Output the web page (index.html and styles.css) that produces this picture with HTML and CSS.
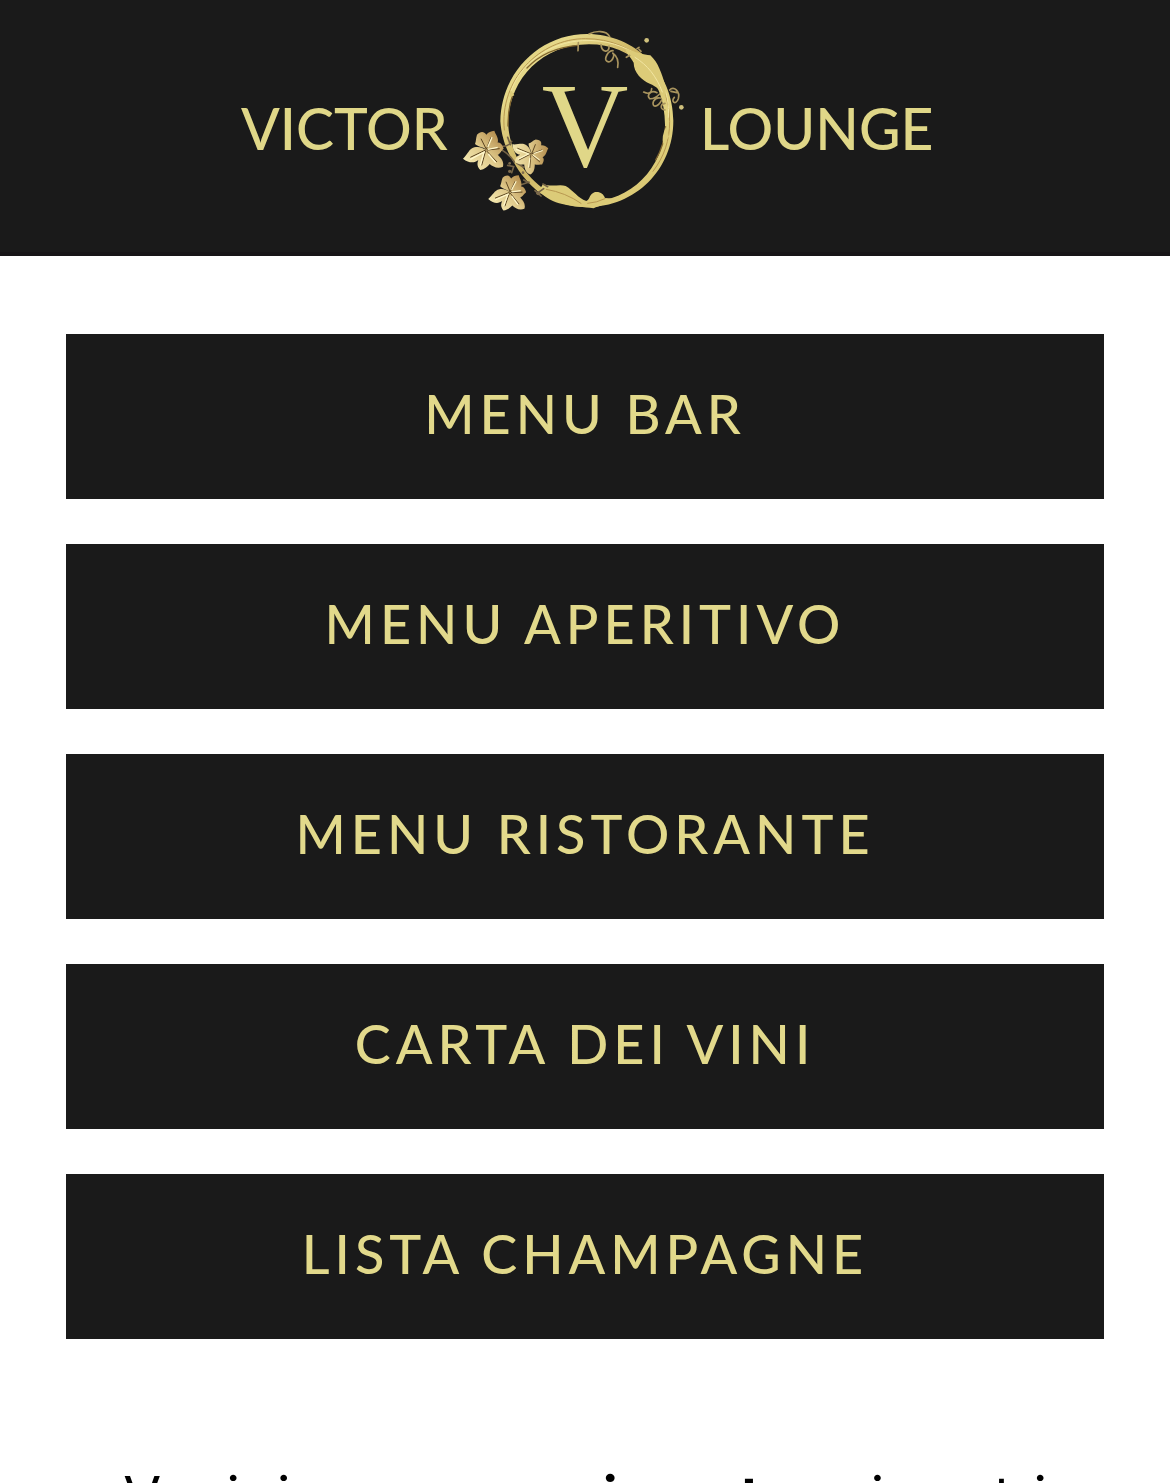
FILE: index.html
```html
<!DOCTYPE html>
<html lang="it">

<head>
  <meta charset="UTF-8">
  <meta name="viewport" content="width=device-width, initial-scale=1.0">
  <title>Victor Lounge</title>
  <link rel="stylesheet" href="styles.css">
</head>

<body>
  <header class="site-header">
    <a href="#" class="logo-link" aria-label="Victor Lounge">
      <svg class="logo" viewBox="0 0 692 186">
        <defs>
          <linearGradient id="gold" x1="0" y1="0" x2="1" y2="1">
            <stop offset="0" stop-color="#d9c874" />
            <stop offset="0.2" stop-color="#e6d98a" />
            <stop offset="0.45" stop-color="#cdb563" />
            <stop offset="0.7" stop-color="#e2d37f" />
            <stop offset="1" stop-color="#d4c06b" />
          </linearGradient>
          <linearGradient id="leaf-gold" x1="0" y1="1" x2="1" y2="0">
            <stop offset="0" stop-color="#fbf3bd" />
            <stop offset="0.5" stop-color="#dfc98a" />
            <stop offset="1" stop-color="#a87c3c" />
          </linearGradient>
          <g id="leaf">
            <path class="leaf-shape" d="M0 8 C-8 -2 -24 0 -34 -10 C-30 -20 -32 -26 -28 -38 C-18 -48 -8 -50 0 -38 C6 -46 14 -48 24 -50 C28 -38 38 -28 34 -14 C42 -16 48 -8 52 4 C44 10 42 20 34 22 C44 32 54 42 50 58 C34 66 20 58 10 50 C4 58 -6 66 -18 68 C-28 58 -28 48 -24 38 C-36 48 -52 48 -70 34 C-56 22 -52 4 -36 0 C-22 -4 -10 2 0 8 Z" />
            <path class="leaf-vein" d="M0 6 L-16 -26 M0 6 L14 -30 M2 8 L40 4 M0 10 L32 44 M-2 10 L-14 54 M-2 8 L-48 30" />
            <path class="leaf-light" d="M-4 13 L-48 36 M-7 14 L-18 54 M5 6 L34 0 M4 0 L17 -30 M6 20 L28 46" />
          </g>
        </defs>

        <text class="logo-word" x="2" y="122">VICTOR</text>
        <text class="logo-word" x="461" y="122">LOUNGE</text>

        <svg x="210" y="-8" width="250" height="200" viewBox="0 0 750 600">
          <!-- ring -->
          <path class="ring" fill-rule="evenodd" d="M414 42 C560 42 673 158 673 302 C673 448 560 561 414 561 C360 561 310 543 268 516 C238 490 212 460 196 430 C172 392 157 350 154 304 C156 160 270 42 414 42 Z M420 73 C280 73 184 176 178 300 C176 344 190 386 210 424 C224 450 248 480 280 504 C320 535 365 548 420 546 C544 544 645 444 648 318 C650 172 552 73 420 73 Z" />
          <path class="ring-line" d="M166 330 C150 180 272 55 410 56 C560 56 662 170 662 304 C662 360 646 410 612 454" />
          <path class="ring-glow" d="M184 220 C210 130 305 66 400 62 C470 58 530 78 576 112 C632 152 664 220 658 292" />
          <path class="ring-shade" d="M234 144 Q290 84 386 76 M192 222 Q176 266 177 318 M650 320 Q648 370 620 420" />

          <!-- swellings of the vine -->
          <path class="bud" d="M530 86 C560 96 584 104 604 106 C628 128 638 160 650 200 L650 232 C638 212 618 198 604 192 C578 180 554 158 554 128 C546 112 528 96 530 86 Z" />
          <path class="ring-glow" d="M558 112 C596 136 622 168 640 216" />
          <path class="bud" d="M282 492 C306 502 332 492 350 498 C374 512 386 534 412 543 C424 538 420 522 438 516 C454 514 464 522 468 534 L500 536 C476 552 450 556 434 565 C404 560 376 562 340 552 C314 546 290 534 270 512 Z" />
          <path class="bud" d="M652 318 Q636 350 643 372 L660 350 Z M184 208 L196 226 L182 232 Z" />
          <path class="ring-line" d="M292 508 Q350 518 396 550 M416 550 Q444 548 468 536" />

          <!-- tendrils -->
          <path class="tendril" d="M420 42 C440 32 472 30 482 50 M388 68 L387 92 M456 74 C458 98 482 100 480 78 M492 92 C476 92 464 118 474 124 C488 132 500 104 490 98 C504 108 510 120 506 142" />
          <path class="tendril" d="M584 216 C600 224 608 218 608 206 M624 218 C606 208 592 226 602 236 C616 238 626 228 632 222 M634 234 C616 230 606 252 616 258 C630 260 636 244 638 240 M648 250 C634 252 632 268 648 270 M662 210 C674 196 694 214 688 236 C680 258 664 244 676 232 M666 214 L684 218" />
          <path class="tendril" d="M532 112 L542 106 M564 86 L570 82 M570 88 L576 94" />
          <circle class="dot" cx="593" cy="61" r="7" />
          <circle class="dot" cx="697" cy="262" r="7" />

          <!-- stems and leaves -->
          <path class="stem" d="M140 384 Q172 390 196 426 M156 378 Q176 382 188 364 M176 352 L184 374 M206 410 L216 436 M176 436 L194 440 L188 458 M204 430 L224 442 M212 496 L240 486 M240 488 L224 480 M258 512 L276 528 M264 520 L284 506 M282 492 L296 500" />
          <circle class="berry" cx="182" cy="454" r="5" />
          <circle class="berry" cx="222" cy="458" r="4" />
          <circle class="berry" cx="182" cy="430" r="4" />
          <circle class="berry" cx="268" cy="520" r="6" />
          <use href="#leaf" transform="translate(112 382)" />
          <use href="#leaf" transform="translate(252 398) rotate(48) scale(0.86)" />
          <use href="#leaf" transform="translate(184 510) rotate(4) scale(0.92)" />
        </svg>

        <text class="logo-initial" x="346" y="138">V</text>
      </svg>
    </a>
  </header>

  <main class="content">
    <nav class="menu-list">
      <a href="#" class="menu-link">MENU BAR</a>
      <a href="#" class="menu-link">MENU APERITIVO</a>
      <a href="#" class="menu-link">MENU RISTORANTE</a>
      <a href="#" class="menu-link">CARTA DEI VINI</a>
      <a href="#" class="menu-link">LISTA CHAMPAGNE</a>
    </nav>

    <p class="newsletter">Vuoi rimanere <strong>aggiornato</strong> sui nostri</p>
  </main>
</body>

</html>
```

FILE: styles.css
```css
* {
  box-sizing: border-box;
}

body {
  margin: 0;
  background: #fff;
  color: #000;
  font-family: Lato, sans-serif;
}

.site-header {
  display: flex;
  justify-content: center;
  padding: 28px 24px 38px;
  background: #1a1a1a;
  border-bottom: 4px solid #171517;
}

.logo-link {
  display: block;
  width: 100%;
  max-width: 692px;
}

.logo {
  display: block;
  width: 100%;
  height: auto;
}

.logo-word {
  fill: #e0d788;
  font-family: Lato, sans-serif;
  font-size: 57px;
  font-weight: 500;
}

.logo-initial {
  fill: #e0d788;
  font-family: "Liberation Serif", serif;
  font-size: 120px;
  text-anchor: middle;
}

.ring {
  fill: url(#gold);
}

.bud {
  fill: #dccb78;
}

.ring-line,
.ring-glow,
.ring-shade,
.tendril,
.stem {
  fill: none;
  stroke-linecap: round;
}

.ring-line {
  stroke: #b89850;
  stroke-width: 3;
}

.ring-glow {
  stroke: #f2e6a2;
  stroke-width: 3;
}

.ring-shade {
  stroke: #80652f;
  stroke-width: 4;
}

.tendril {
  stroke: #a9945e;
  stroke-width: 5;
}

.stem {
  stroke: #756346;
  stroke-width: 5;
}

.berry {
  fill: #7d6b4c;
}

.dot {
  fill: #cfc07c;
}

.leaf-shape {
  fill: url(#leaf-gold);
}

.leaf-vein {
  fill: none;
  stroke: #59421f;
  stroke-width: 3;
}

.leaf-light {
  fill: none;
  stroke: #fff8cc;
  stroke-width: 4;
}

.content {
  padding: 78px 66px 0;
}

.menu-list {
  display: flex;
  flex-direction: column;
  gap: 45px;
}

.menu-link {
  padding: 47px 24px 52px;
  background: #1a1a1a;
  color: #e2d98b;
  font-size: 54px;
  font-weight: 500;
  line-height: 66px;
  letter-spacing: 5px;
  text-align: center;
  text-decoration: none;
}

.newsletter {
  margin: 120px 0 0;
  font-family: Inter, sans-serif;
  font-size: 55px;
  line-height: 74px;
  text-align: center;
}
```
